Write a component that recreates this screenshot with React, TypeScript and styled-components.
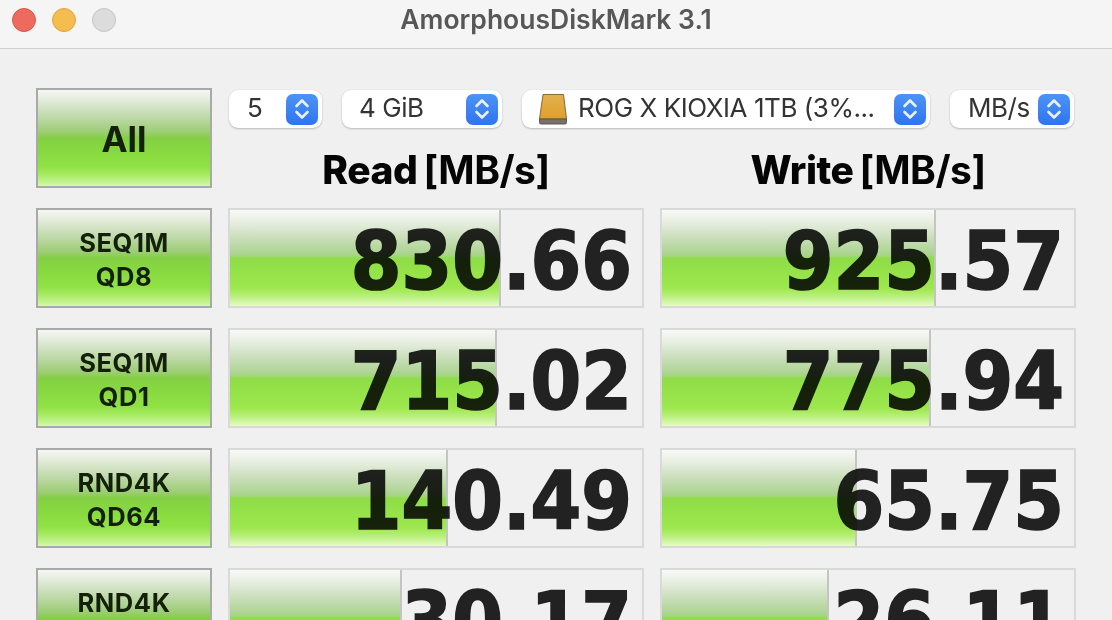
import React from "react";
import styled, { createGlobalStyle } from "styled-components";

const Global = createGlobalStyle`
  html, body { margin: 0; padding: 0; height: 620px; overflow: hidden; background: #f0f0f0; }
`;

const barGreen = `linear-gradient(180deg,
  #f8f9f6 0%, #e8efe2 12%, #cbdfbc 28%, #aed594 44%, #a4d580 48%, #8fdd47 50%, #95e249 65%, #9fe84f 82%, #bdf083 91%, #e6fbc6 100%)`;

const buttonGreen = `linear-gradient(180deg,
  #f6f7f4 0%, #e4ecdc 10%, #bfd9aa 28%, #9ccd74 44%, #84cf44 50%, #87d840 62%, #90e244 80%, #a6ea62 88%, #d4f8a8 100%)`;

const Window = styled.div`
  width: 1112px;
  height: 620px;
  overflow: hidden;
  background: #f0f0f0;
  font-family: Inter, "Liberation Sans", sans-serif;
`;

const TitleBar = styled.header`
  height: 48px;
  border-bottom: 1px solid #d0d0d0;
  background: #f5f5f5;
  display: grid;
  grid-template-columns: 1fr auto 1fr;
  align-items: center;
  padding: 0 12px;
`;

const Lights = styled.div`
  display: flex;
  gap: 16px;
  margin-top: -8px;
`;

const Light = styled.span<{ $c: string; $b: string }>`
  width: 24px;
  height: 24px;
  box-sizing: border-box;
  border-radius: 50%;
  background: ${(p) => p.$c};
  border: 1px solid ${(p) => p.$b};
`;

const Title = styled.h1`
  margin: -11px 0 0;
  font-size: 26.5px;
  font-weight: 600;
  color: #575757;
`;

const Board = styled.main`
  display: grid;
  grid-template-columns: 176px 416px 416px;
  column-gap: 16px;
  row-gap: 20px;
  grid-auto-rows: 100px;
  padding: 39px 0 0 36px;
`;

const LabelButton = styled.button<{ $big?: boolean }>`
  box-sizing: border-box;
  margin: 0;
  padding: ${(p) => (p.$big ? 1 : 4)}px 0 0;
  border: 2px solid #a9a9a9;
  background: ${buttonGreen};
  color: #14200c;
  font-family: Inter, "Liberation Sans", sans-serif;
  font-weight: 700;
  font-size: ${(p) => (p.$big ? 35 : 25.5)}px;
  line-height: 34px;
  letter-spacing: ${(p) => (p.$big ? 0 : 0.6)}px;
`;

const ControlArea = styled.div`
  grid-column: 2 / 4;
  display: flex;
  flex-direction: column;
  margin-top: 2px;
`;

const Toolbar = styled.div`
  display: flex;
  gap: 20px;
  padding-left: 1px;
`;

const Select = styled.div<{ $w: number; $pad: number }>`
  box-sizing: border-box;
  width: ${(p) => p.$w}px;
  height: 38px;
  flex: none;
  display: flex;
  align-items: center;
  padding: 0 4px 0 ${(p) => p.$pad}px;
  background: #fff;
  border-radius: 9px;
  box-shadow: 0 1px 2px rgba(0, 0, 0, 0.22), 0 0 1px rgba(0, 0, 0, 0.12);
  font-size: 26px;
  color: #333;
  white-space: nowrap;
`;

const SelectText = styled.span`
  flex: 1;
  min-width: 0;
  margin-top: -4px;
  letter-spacing: -0.45px;
`;

const Stepper = styled.span`
  flex: none;
  width: 32px;
  height: 31px;
  border-radius: 7px;
  background: linear-gradient(180deg, #4c93f6, #2f74f0);
  display: flex;
  align-items: center;
  justify-content: center;
`;

const DriveIcon = styled.svg`
  flex: none;
  margin-right: 10px;
`;

const Headings = styled.div`
  display: grid;
  grid-template-columns: 416px 416px;
  column-gap: 16px;
  margin-top: 18px;
`;

const Heading = styled.h2`
  margin: 0;
  text-align: center;
  font-size: 39px;
  line-height: 47px;
  font-weight: 800;
  color: #050505;
  letter-spacing: -0.5px;
`;

const Unit = styled.span`
  font-weight: 700;
  margin-left: 6px;
`;

const Cell = styled.div`
  position: relative;
  box-sizing: border-box;
  border: 2px solid #d9d9d9;
  background: #f0f0f0;
  overflow: hidden;
  display: flex;
  align-items: center;
  justify-content: flex-end;
  padding: 0 10px 0 0;
`;

const Fill = styled.div`
  position: absolute;
  left: 0;
  top: 0;
  bottom: 0;
  box-sizing: border-box;
  border-right: 2px solid #c4c4c4;
  background: ${barGreen};
`;

const Value = styled.span`
  position: relative;
  top: 3px;
  font-family: "DejaVu Sans Condensed", "DejaVu Sans", sans-serif;
  font-weight: 700;
  font-stretch: condensed;
  font-size: 81px;
  line-height: 96px;
  color: #242424;
  -webkit-text-stroke: 1.7px #242424;
  mix-blend-mode: multiply;
`;

const Chevrons = () => (
  <svg width="20" height="24" viewBox="0 0 20 24" fill="none" stroke="#e8f1ff" strokeWidth="2.6" strokeLinecap="round" strokeLinejoin="round">
    <path d="M4.5 9 10 3.5 15.5 9" />
    <path d="M4.5 15 10 20.5 15.5 15" />
  </svg>
);

const Drive = () => (
  <DriveIcon width="30" height="32" viewBox="0 0 30 32">
    <defs>
      <linearGradient id="drive" x1="0" y1="0" x2="0" y2="1">
        <stop offset="0" stopColor="#e2b04e" />
        <stop offset="1" stopColor="#e09f2c" />
      </linearGradient>
    </defs>
    <path d="M5 1.5h20.5L28.5 26H1.5Z" fill="url(#drive)" stroke="#8a6a28" strokeWidth="1" />
    <path d="M1.5 26h27v3.5a1.5 1.5 0 0 1-1.5 1.5H3a1.5 1.5 0 0 1-1.5-1.5Z" fill="#77716a" stroke="#5d5850" strokeWidth="1" />
  </DriveIcon>
);

const rows = [
  { label: ["SEQ1M", "QD8"], read: "830.66", rw: 271, write: "925.57", ww: 274 },
  { label: ["SEQ1M", "QD1"], read: "715.02", rw: 267, write: "775.94", ww: 269 },
  { label: ["RND4K", "QD64"], read: "140.49", rw: 218, write: "65.75", ww: 195 },
  { label: ["RND4K", "QD1"], read: "30.17", rw: 172, write: "26.11", ww: 167 },
];

const Result = ({ value, width }: { value: string; width: number }) => (
  <Cell>
    <Fill style={{ width }} />
    <Value>{value}</Value>
  </Cell>
);

export default function App() {
  return (
    <Window>
      <Global />
      <TitleBar>
        <Lights>
          <Light $c="#ee6a5f" $b="#d9574d" />
          <Light $c="#f5bd4f" $b="#dca63c" />
          <Light $c="#dcdcdc" $b="#c4c4c4" />
        </Lights>
        <Title>AmorphousDiskMark 3.1</Title>
        <span />
      </TitleBar>
      <Board>
        <LabelButton $big>All</LabelButton>
        <ControlArea>
          <Toolbar>
            <Select $w={93} $pad={18}><SelectText>5</SelectText><Stepper><Chevrons /></Stepper></Select>
            <Select $w={160} $pad={17}><SelectText>4 GiB</SelectText><Stepper><Chevrons /></Stepper></Select>
            <Select $w={408} $pad={16}><Drive /><SelectText>ROG X KIOXIA 1TB (3%...</SelectText><Stepper><Chevrons /></Stepper></Select>
            <Select $w={124} $pad={18}><SelectText>MB/s</SelectText><Stepper><Chevrons /></Stepper></Select>
          </Toolbar>
          <Headings>
            <Heading>Read<Unit>[MB/s]</Unit></Heading>
            <Heading>Write<Unit>[MB/s]</Unit></Heading>
          </Headings>
        </ControlArea>
        {rows.map((r) => (
          <React.Fragment key={r.label.join()}>
            <LabelButton>{r.label[0]}<br />{r.label[1]}</LabelButton>
            <Result value={r.read} width={r.rw} />
            <Result value={r.write} width={r.ww} />
          </React.Fragment>
        ))}
      </Board>
    </Window>
  );
}
